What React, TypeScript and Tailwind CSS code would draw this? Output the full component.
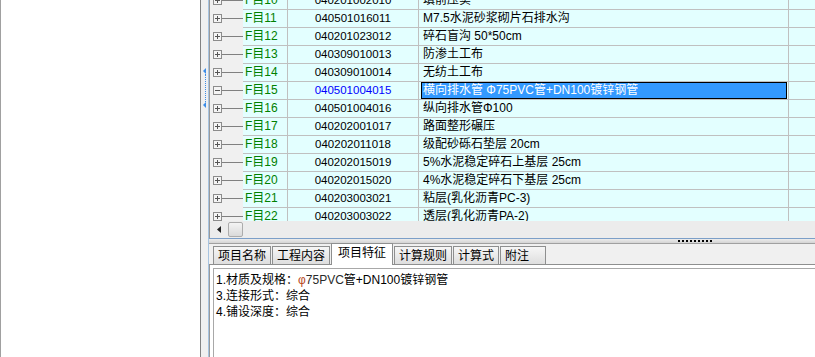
import React from 'react';

const FONT = { fontFamily: '"Liberation Sans", "Noto Sans CJK SC", sans-serif' };

const ROWS: [string, string, string][] = [
  ['F目10', '040201002010', '填前压实'],
  ['F目11', '040501016011', 'M7.5水泥砂浆砌片石排水沟'],
  ['F目12', '040201023012', '碎石盲沟 50*50cm'],
  ['F目13', '040309010013', '防渗土工布'],
  ['F目14', '040309010014', '无纺土工布'],
  ['F目15', '040501004015', '横向排水管 Φ75PVC管+DN100镀锌钢管'],
  ['F目16', '040501004016', '纵向排水管Φ100'],
  ['F目17', '040202001017', '路面整形碾压'],
  ['F目18', '040202011018', '级配砂砾石垫层 20cm'],
  ['F目19', '040202015019', '5%水泥稳定碎石上基层 25cm'],
  ['F目20', '040202015020', '4%水泥稳定碎石下基层 25cm'],
  ['F目21', '040203003021', '粘层(乳化沥青PC-3)'],
  ['F目22', '040203003022', '透层(乳化沥青PA-2)'],
];

const TABS = ['项目名称', '工程内容', '项目特征', '计算规则', '计算式', '附注'];

function TreeBox({ open }: { open: boolean }) {
  return (
    <svg width="9" height="9" viewBox="0 0 9 9" className="shrink-0">
      <rect x="0.5" y="0.5" width="8" height="8" fill="#f4f4f4" stroke="#8c8c8c" />
      <line x1="2" y1="4.5" x2="7" y2="4.5" stroke="#555" />
      {!open && <line x1="4.5" y1="2" x2="4.5" y2="7" stroke="#555" />}
    </svg>
  );
}

function Row({ row, selected }: { row: [string, string, string]; selected: boolean }) {
  const [id, code, name] = row;
  return (
    <div className="flex h-[18px] leading-[17px]">
      <div className="w-[33px] flex items-center pl-[3px] pb-px bg-[#f0f0f0]">
        <TreeBox open={selected} />
        <div className="flex-1 h-px bg-[#808080]" />
      </div>
      <div className="w-[45px] shrink-0 border-r border-b border-[#c0c0c0] bg-[#e3ffff] pl-[2px] text-[#008000]">{id}</div>
      <div
        className={`w-[131px] shrink-0 border-r border-b border-[#c0c0c0] bg-[#e3ffff] text-center text-[11.5px] ${selected ? 'text-[#0000ff]' : 'text-black'}`}
      >
        {code}
      </div>
      <div className="w-[370px] shrink-0 border-r border-b border-[#c0c0c0] bg-[#e3ffff] whitespace-nowrap overflow-hidden">
        {selected ? (
          <div className="ml-[2px] mr-px h-[17px] border border-black bg-[#3399ff] text-white pl-px leading-[15px]">{name}</div>
        ) : (
          <div className="pl-[4px] text-black">{name}</div>
        )}
      </div>
      <div className="flex-1 border-b border-[#c0c0c0] bg-[#e3ffff]" />
    </div>
  );
}

export default function App() {
  return (
    <div className="flex w-[815px] h-[357px] overflow-hidden bg-white text-[12px]" style={FONT}>
      {/* left blank panel */}
      <div className="w-[200px] shrink-0 border-l border-[#a0a0a0] bg-white" />

      {/* vertical splitter */}
      <div className="w-[8px] shrink-0 border-l border-[#828282] bg-[#f0f0f0] flex flex-col items-center pt-[68px] pl-px">
        <svg width="4" height="6" viewBox="0 0 4 6">
          <polygon points="0,3 3,0 3,6" fill="#3c8ce6" />
        </svg>
        <div className="h-[28px] w-px border-l border-dotted border-[#3c8ce6] ml-[1px]" />
        <svg width="4" height="6" viewBox="0 0 4 6">
          <polygon points="0,3 3,0 3,6" fill="#3c8ce6" />
        </svg>
      </div>

      {/* main panel */}
      <div className="flex-1 flex flex-col border-l border-[#a8c4e0]">
        {/* grid */}
        <div className="h-[221px] overflow-hidden border-l border-[#9a9a9a]">
          <div className="mt-[-8px]">
            {ROWS.map((r, i) => (
              <Row key={i} row={r} selected={i === 5} />
            ))}
          </div>
        </div>

        {/* horizontal scrollbar */}
        <div className="h-[17px] flex items-center border-l border-[#9a9a9a] bg-[#ececec]">
          <svg width="4" height="7" viewBox="0 0 4 7" className="ml-[7px]">
            <polygon points="0,3.5 4,0 4,7" fill="#222" />
          </svg>
          <div className="ml-[7px] w-[15px] h-[15px] rounded-[2px] border border-[#acacac] bg-gradient-to-b from-[#f4f4f4] to-[#dadada]" />
        </div>

        {/* horizontal splitter */}
        <div className="h-[6px] border-t border-[#7c9fc8] border-b border-b-[#a0a0a0] bg-gradient-to-b from-[#ececec] to-[#d4d4d4] flex items-start">
          <div className="ml-[469px] mt-px flex gap-[2px]">
            {Array.from({ length: 9 }).map((_, i) => (
              <div key={i} className="w-[2px] h-[2px] bg-black" />
            ))}
          </div>
        </div>

        {/* tabs */}
        <div className="h-[21px] flex items-end bg-[#f0f0f0] border-b border-[#8e8f8f] pl-[4px] gap-px">
          {TABS.map((t, i) =>
            i === 2 ? (
              <div
                key={t}
                className="h-[22px] -mb-px px-[6px] bg-white border border-b-0 border-[#8e8f8f] leading-[18px] text-black"
              >
                {t}
              </div>
            ) : (
              <div
                key={t}
                className={`h-[18px] px-[4px] border border-b-0 border-[#8e8f8f] bg-gradient-to-b from-[#f6f6f6] to-[#dedede] leading-[18px] text-black ${i === 5 ? 'min-w-[46px]' : ''}`}
              >
                {t}
              </div>
            ),
          )}
        </div>

        {/* content */}
        <div className="flex-1 bg-white pl-[3px] pt-[3px] border-l border-[#9a9a9a]">
          <div className="h-full border-t border-l border-[#a8a8a8] pl-[2px] pt-[3px] leading-[16px] text-black">
            <div>
              1.材质及规格：<span className="text-[#b8471a]">φ</span>
              <span className="text-[#2a2a2a]">75PVC</span>管+DN100镀锌钢管
            </div>
            <div>3.连接形式：综合</div>
            <div>4.铺设深度：综合</div>
          </div>
        </div>
      </div>
    </div>
  );
}
